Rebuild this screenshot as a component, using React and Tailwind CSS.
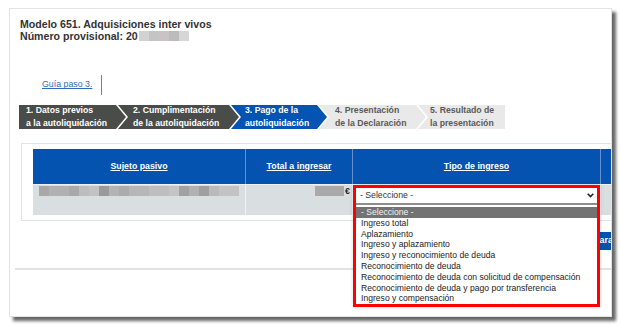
const titleBlur = ['bg-[#d2d2d2]', 'bg-[#c4c4c4]', 'bg-[#cbc3c3]', 'bg-[#bcbcbc]', 'bg-[#d6d6d6]'];

const nameBlur = [
  'bg-[#a8a8a8]', 'bg-[#b1b1b1]', 'bg-[#b1b1b1]', 'bg-[#a9a9a9]', 'bg-[#bdbdbd]',
  'bg-[#c2c2c2]', 'bg-[#9a9a9a]', 'bg-[#b3b3b3]', 'bg-[#ababab]', 'bg-[#b6b6b6]',
  'bg-[#b6b6b6]', 'bg-[#bebebe]', 'bg-[#bebebe]', 'bg-[#c4c4c4]', 'bg-[#a1a1a1]',
  'bg-[#b1b1b1]', 'bg-[#9f9f9f]', 'bg-[#bababa]', 'bg-[#c3c3c3]', 'bg-[#c3c3c3]',
];

const options = [
  'Ingreso total',
  'Aplazamiento',
  'Ingreso y aplazamiento',
  'Ingreso y reconocimiento de deuda',
  'Reconocimiento de deuda',
  'Reconocimiento de deuda con solicitud de compensación',
  'Reconocimiento de deuda y pago por transferencia',
  'Ingreso y compensación',
];

const clipFirst = '[clip-path:polygon(0_0,calc(100%_-_10px)_0,100%_50%,calc(100%_-_10px)_100%,0_100%)]';
const clipMid = '[clip-path:polygon(0_0,calc(100%_-_10px)_0,100%_50%,calc(100%_-_10px)_100%,0_100%,10px_50%)]';
const clipLast = '[clip-path:polygon(0_0,100%_0,100%_100%,0_100%,10px_50%)]';

function Step({ lines, className }) {
  return (
    <div className={`flex h-[24px] shrink-0 flex-col justify-center text-[8.7px] font-bold leading-[13px] ${className}`}>
      <span>{lines[0]}</span>
      <span>{lines[1]}</span>
    </div>
  );
}

export default function App() {
  return (
    <div className="h-[327px] w-[621px] bg-white pl-[9px] pt-[8px] font-['Liberation_Sans',Arial,sans-serif]">
      <div className="relative h-[309px] w-[603px] overflow-hidden border border-[#e3e3e3] bg-white shadow-[4px_4px_3px_rgba(0,0,0,0.6)]">
        {/* title */}
        <div className="pl-[10px] pt-[9px] text-[10.6px] font-bold leading-[12px] text-[#333]">
          <div>Modelo 651. Adquisiciones inter vivos</div>
          <div className="flex items-center">
            <span>Número provisional: 20</span>
            <span className="ml-[1px] flex h-[10px]">
              {titleBlur.map((c, i) => (
                <span key={i} className={`h-full w-[10px] ${c}`} />
              ))}
            </span>
          </div>
        </div>

        {/* guide link */}
        <div className="mt-[33px] flex h-[20px] items-center pl-[32px]">
          <a href="#" className="text-[8.8px] text-[#2f6cb5] underline">Guía paso 3.</a>
          <span className="ml-[9px] h-[20px] w-px bg-[#5b86c4]" />
        </div>

        {/* steps */}
        <div className="mt-[10px] flex pl-[9px]">
          <Step lines={['1. Datos previos', 'a la autoliquidación']} className={`w-[107px] bg-[#4a4c4a] pl-[7px] text-white ${clipFirst}`} />
          <Step lines={['2. Cumplimentación', 'de la autoliquidación']} className={`-ml-[8px] w-[121px] bg-[#4a4c4a] pl-[15px] text-white ${clipMid}`} />
          <Step lines={['3. Pago de la', 'autoliquidación']} className={`-ml-[8px] w-[96px] bg-[#0553b2] pl-[14px] text-white ${clipMid}`} />
          <Step lines={['4. Presentación', 'de la Declaración']} className={`-ml-[8px] w-[107px] bg-[#e9e9e9] pl-[16px] text-[#5a5a5a] ${clipMid}`} />
          <Step lines={['5. Resultado de', 'la presentación']} className={`-ml-[8px] w-[87px] bg-[#e9e9e9] pl-[12px] text-[#5a5a5a] ${clipLast}`} />
        </div>

        {/* table */}
        <div className="ml-[11px] mt-[14px] w-[700px] border border-[#dce5ec] py-[5px] pl-[11px]">
          <div className="flex h-[35px] bg-[#0453b1] text-[8.8px] font-bold text-white underline">
            <div className="flex w-[212px] shrink-0 items-center justify-center">Sujeto pasivo</div>
            <div className="flex w-[107px] shrink-0 items-center justify-center border-l border-[#6592cf]">Total a ingresar</div>
            <div className="flex w-[248px] shrink-0 items-center justify-center border-l border-[#6592cf]">Tipo de ingreso</div>
            <div className="w-[100px] shrink-0 border-l border-[#6592cf]" />
          </div>
          <div className="flex h-[31px] border-t border-[#eef2f4] bg-[#d9dfe0]">
            <div className="w-[212px] shrink-0 pl-[6px] pt-[1px]">
              <div className="flex h-[10px]">
                {nameBlur.map((c, i) => (
                  <span key={i} className={`h-full w-[10px] ${c}`} />
                ))}
              </div>
            </div>
            <div className="flex w-[107px] shrink-0 items-start justify-end border-l border-[#eef2f4] pr-[2px] pt-[1px]">
              <span className="h-[10px] w-[29px] bg-[#a9a9a9]" />
              <span className="ml-[1px] text-[8.8px] font-bold leading-[10px] text-[#222]">€</span>
            </div>
            <div className="w-[248px] shrink-0 border-l border-[#eef2f4]" />
            <div className="w-[100px] shrink-0 border-l border-[#eef2f4]" />
          </div>
        </div>

        {/* action button, mostly hidden behind the open list */}
        <div className="mt-[11px] flex pl-[563px]">
          <button className="h-[18px] shrink-0 bg-[#0453b1] px-[8px] text-[8.8px] font-bold text-white">Declarar</button>
        </div>

        <div className="ml-[5px] mt-[18px] h-[2px] bg-[#e2e2e2]" />

        {/* open select, highlighted in red */}
        <div className="absolute left-[343px] top-[176px] h-[122px] w-[247px] border-[3px] border-[#ff0000] bg-white shadow-[0_0_4px_rgba(0,0,0,0.15)]">
          <div className="flex h-[15px] items-center justify-between pl-[4px] pr-[3px] text-[8.7px] text-[#333]">
            <span>- Seleccione -</span>
            <svg width="7" height="5" viewBox="0 0 7 5" fill="none" stroke="#222" strokeWidth="1.6">
              <path d="M0.7 0.8 3.5 3.6 6.3 0.8" />
            </svg>
          </div>
          <div className="h-[2px] bg-[#8f8f8f]" />
          <div className="pt-[2px] text-[8.6px] leading-[10.8px] text-[#222]">
            <div className="bg-[#737373] pl-[5px] text-[#f2f2f2]">- Seleccione -</div>
            {options.map((o) => (
              <div key={o} className="pl-[5px]">{o}</div>
            ))}
          </div>
        </div>
      </div>
    </div>
  );
}
